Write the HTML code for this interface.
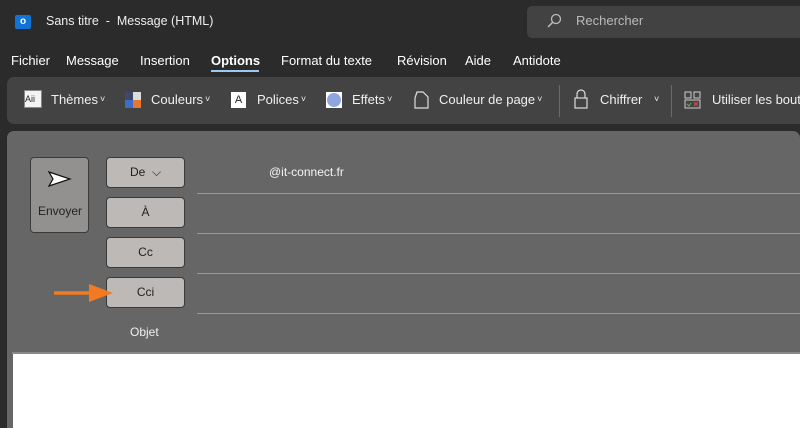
<!DOCTYPE html>
<html><head><meta charset="utf-8"><style>
*{margin:0;padding:0;box-sizing:border-box}
html{width:800px;height:428px;overflow:hidden;background:#2b2b2b}
body{width:800px;height:428px;overflow:hidden;background:#2b2b2b;font-family:"Segoe UI","Liberation Sans",sans-serif;color:#fff;position:relative;font-size:13px}
.a{position:absolute;white-space:nowrap}
.btn{position:absolute;left:106px;width:79px;height:31px;background:#bdb9b6;border:1px solid #3a3a3a;border-radius:4px;color:#222;font-size:12px;text-align:center;line-height:29px}
.ln{position:absolute;left:197px;right:0;height:1px;background:#9a9a9a}
.rb{position:absolute;top:92px;font-size:13px;color:#f0f0f0;white-space:nowrap}
.rb small{font-size:9px;vertical-align:2px;margin-left:2px}
.sep{position:absolute;top:85px;width:1px;height:32px;background:#6a6a6a}
</style></head><body>
<div class="a" style="left:15px;top:15px;width:16px;height:14px;background:#1273d6;border-radius:2px;font-size:10px;font-weight:bold;text-align:center;line-height:14px">o</div>
<div class="a" style="left:46px;top:14px;font-size:12.5px;color:#eee">Sans titre&nbsp; - &nbsp;Message (HTML)</div>
<div class="a" style="left:527px;top:6px;width:280px;height:32px;background:#424242;border-radius:5px"></div>
<svg class="a" style="left:546px;top:13px" width="16" height="16"><circle cx="10" cy="6" r="4.5" fill="none" stroke="#bbb" stroke-width="1.3"/><path d="M6.8 9.2 2 14" stroke="#bbb" stroke-width="1.5"/></svg>
<div class="a" style="left:576px;top:13px;color:#bbb;font-size:13px">Rechercher</div>
<div class="a" style="left:11px;top:53px;font-size:13px">Fichier</div>
<div class="a" style="left:66px;top:53px">Message</div>
<div class="a" style="left:140px;top:53px">Insertion</div>
<div class="a" style="left:211px;top:53px;font-weight:bold">Options</div>
<div class="a" style="left:211px;top:70px;width:48px;height:2px;background:#9cc9f0"></div>
<div class="a" style="left:281px;top:53px">Format du texte</div>
<div class="a" style="left:397px;top:53px">Révision</div>
<div class="a" style="left:465px;top:53px">Aide</div>
<div class="a" style="left:513px;top:53px">Antidote</div>
<div class="a" style="left:7px;top:77px;width:800px;height:47px;background:#434343;border-radius:7px"></div>
<div class="a" style="left:24px;top:90px;width:18px;height:18px;background:#f3f3f3;border:1px solid #888;color:#223;font-size:9px;line-height:16px">Aii</div>
<div class="rb" style="left:51px">Thèmes<small>˅</small></div>
<div class="a" style="left:125px;top:92px;width:16px;height:16px;background:linear-gradient(90deg,#3b4a6b 50%,#ddd 50%)"></div>
<div class="a" style="left:125px;top:100px;width:16px;height:8px;background:linear-gradient(90deg,#3d6dc4 50%,#e8772e 50%)"></div>
<div class="rb" style="left:151px">Couleurs<small>˅</small></div>
<div class="a" style="left:231px;top:92px;width:15px;height:16px;background:#fff;color:#222;font-size:11px;text-align:center;line-height:16px">A</div>
<div class="rb" style="left:257px">Polices<small>˅</small></div>
<div class="a" style="left:326px;top:92px;width:16px;height:16px;background:#fff;padding:1px"><div style="width:14px;height:14px;border-radius:50%;background:#8ea6e0"></div></div>
<div class="rb" style="left:352px">Effets<small>˅</small></div>
<svg class="a" style="left:412px;top:90px" width="18" height="20"><path d="M5 2h6l5 5v11H3V8z" fill="none" stroke="#ddd" stroke-width="1.2"/></svg>
<div class="rb" style="left:439px">Couleur de page<small>˅</small></div>
<div class="sep" style="left:559px"></div>
<svg class="a" style="left:573px;top:88px" width="16" height="22"><path d="M4 10V6a4 4 0 0 1 8 0v4" fill="none" stroke="#ddd" stroke-width="1.2"/><rect x="2" y="10" width="12" height="10" fill="none" stroke="#ddd" stroke-width="1.2"/></svg>
<div class="rb" style="left:600px">Chiffrer</div>
<div class="rb" style="left:652px"><small>˅</small></div>
<div class="sep" style="left:671px"></div>
<svg class="a" style="left:684px;top:91px" width="18" height="18"><rect x="1" y="1" width="6" height="6" fill="none" stroke="#ccc"/><rect x="10" y="1" width="6" height="6" fill="none" stroke="#ccc"/><rect x="1" y="9" width="15" height="8" fill="none" stroke="#ccc"/><path d="M3 13l2 2 2-3" stroke="#4c4" fill="none"/><path d="M10 11l4 4M14 11l-4 4" stroke="#e44"/></svg>
<div class="rb" style="left:712px">Utiliser les boutons</div>
<div class="a" style="left:7px;top:131px;width:793px;height:297px;background:#666;border-radius:7px 7px 0 0"></div>
<div class="a" style="left:30px;top:157px;width:59px;height:76px;background:#939190;border:1px solid #3a3a3a;border-radius:4px"></div>
<svg class="a" style="left:48px;top:171px" width="24" height="16"><path d="M1 1 22 8 1 15 5 8z" fill="#fff" stroke="#111" stroke-width="1.2"/></svg>
<div class="a" style="left:38px;top:204px;color:#222;font-size:12px">Envoyer</div>
<div class="btn" style="top:157px">De &nbsp;⌵</div>
<div class="btn" style="top:197px">À</div>
<div class="btn" style="top:237px">Cc</div>
<div class="btn" style="top:277px">Cci</div>
<div class="ln" style="top:193px"></div>
<div class="ln" style="top:233px"></div>
<div class="ln" style="top:273px"></div>
<div class="ln" style="top:313px"></div>
<div class="a" style="left:269px;top:165px;font-size:12px;color:#f4f4f4">@it-connect.fr</div>
<div class="a" style="left:130px;top:325px;font-size:12px;color:#f0f0f0">Objet</div>
<svg class="a" style="left:53px;top:282px" width="60" height="22"><path d="M1 11H38" stroke="#f27b21" stroke-width="3.5"/><path d="M36 2 60 11 36 20z" fill="#f27b21"/></svg>
<div class="a" style="left:12px;top:352px;width:788px;height:2px;background:#888"></div>
<div class="a" style="left:13px;top:354px;width:787px;height:74px;background:#fff"></div>
</body></html>
